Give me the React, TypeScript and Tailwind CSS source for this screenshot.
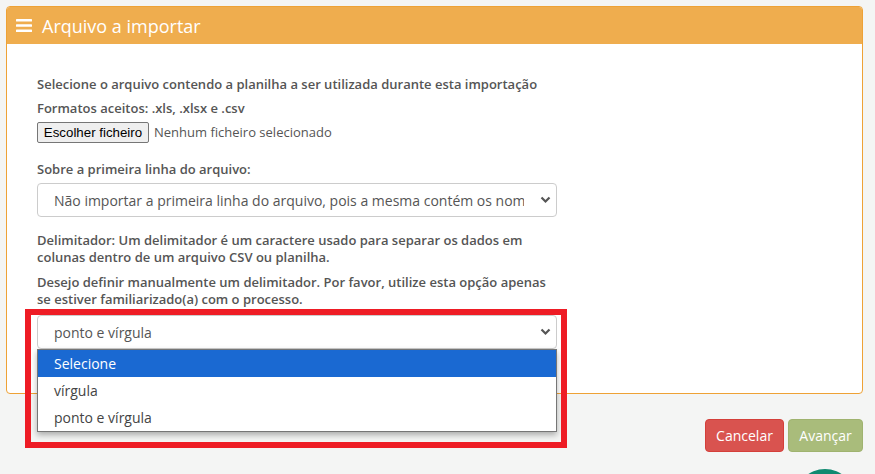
import React from 'react';

const Chevron = () => (
  <svg width="11" height="8" viewBox="0 0 11 8" className="shrink-0">
    <path d="M1.5 1.5 L5.5 5.5 L9.5 1.5" fill="none" stroke="#555" strokeWidth="2.2" />
  </svg>
);

const FakeSelect: React.FC<{ value: string }> = ({ value }) => (
  <div className="h-[34px] w-[520px] border border-[#cccccc] rounded-[4px] bg-white flex items-center pl-[16px] pr-[5px]">
    <span className="flex-1 overflow-hidden whitespace-nowrap text-[14px] text-[#555] mr-[16px]">{value}</span>
    <Chevron />
  </div>
);

const options = ['Selecione', 'vírgula', 'ponto e vírgula'];

export default function App() {
  return (
    <div className="relative min-h-[474px] overflow-hidden bg-[#f4f5f4] pt-[6px] pl-[6px] pr-[12px] font-['Open_Sans',sans-serif]">
      <div className="rounded-[4px] border border-[#eea236] bg-white">
        <div className="flex h-[37px] items-center gap-[10px] rounded-t-[3px] bg-[#efad4e] pl-[9px] text-white">
          <svg width="16" height="13" viewBox="0 0 16 13">
            <rect x="0" y="0" width="16" height="2.6" rx="0.6" fill="#fff" />
            <rect x="0" y="5.2" width="16" height="2.6" rx="0.6" fill="#fff" />
            <rect x="0" y="10.4" width="16" height="2.6" rx="0.6" fill="#fff" />
          </svg>
          <span className="text-[18px] leading-none">Arquivo a importar</span>
        </div>

        <div className="pl-[30px] pt-[31px] pb-[44px]">
          <div className="w-[520px] text-[13px] text-[#555]">
            <p className="font-semibold leading-[18px]">
              Selecione o arquivo contendo a planilha a ser utilizada durante esta importação
            </p>
            <p className="mt-[6px] font-semibold leading-[18px]">Formatos aceitos: .xls, .xlsx e .csv</p>

            <div className="mt-[5px] flex h-[21px] items-center gap-[5px]">
              <button className="h-[21px] w-[112px] rounded-[2px] border border-[#767676] bg-[#efefef] font-['Liberation_Sans',sans-serif] text-[13.3px] text-black">
                Escolher ficheiro
              </button>
              <span className="text-[13px] text-[#555]">Nenhum ficheiro selecionado</span>
            </div>

            <p className="mt-[17px] font-semibold leading-[18px]">Sobre a primeira linha do arquivo:</p>
            <div className="mt-[5px]">
              <FakeSelect value="Não importar a primeira linha do arquivo, pois a mesma contém os nomes das colunas" />
            </div>

            <p className="mt-[15px] font-semibold leading-[17px]">
              Delimitador: Um delimitador é um caractere usado para separar os dados em colunas dentro de um arquivo CSV ou planilha.
            </p>
            <p className="mt-[8px] font-semibold leading-[17px]">
              Desejo definir manualmente um delimitador. Por favor, utilize esta opção apenas se estiver familiarizado(a) com o processo.
            </p>

            <div className="relative mt-[7px]">
              <FakeSelect value="ponto e vírgula" />
              <div className="absolute left-0 top-full z-20 w-[520px] border border-[#767676] bg-white shadow-[0_3px_6px_rgba(0,0,0,0.3)]">
                {options.map((o, i) => (
                  <div
                    key={o}
                    className={
                      i === 0
                        ? 'flex h-[27px] items-center bg-[#1a69d2] pl-[16px] text-[14px] text-white'
                        : 'flex h-[27px] items-center pl-[16px] text-[14px] text-[#444]'
                    }
                  >
                    {o}
                  </div>
                ))}
              </div>
              <div className="pointer-events-none absolute -left-[12px] -top-[6px] -right-[10px] -bottom-[99px] z-30 border-[6px] border-[#ee1c25]" />
            </div>
          </div>
        </div>
      </div>

      <div className="mt-[25px] flex justify-end gap-[4px]">
        <button className="h-[33px] w-[79px] rounded-[4px] border border-[#d43f3a] bg-[#d9534f] text-[14px] text-white">
          Cancelar
        </button>
        <button className="h-[33px] w-[75px] rounded-[4px] border border-[#9fb36f] bg-[#a9bc7b] text-[14px] text-white">
          Avançar
        </button>
      </div>

      <div className="absolute left-[795px] top-[469px] h-[60px] w-[60px] rounded-full bg-[#108a70]" />
    </div>
  );
}
